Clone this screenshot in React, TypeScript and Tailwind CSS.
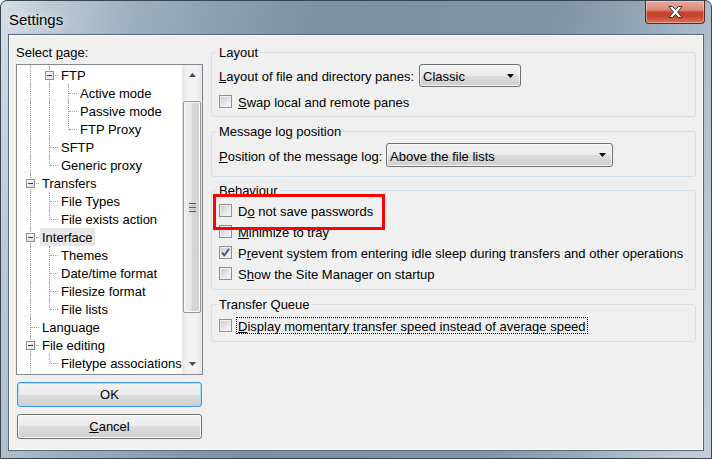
import React from "react";

type Row = { label: string; level: number; box?: boolean; last?: boolean; selected?: boolean };

const rows: Row[] = [
  { label: "FTP", level: 1, box: true },
  { label: "Active mode", level: 2 },
  { label: "Passive mode", level: 2 },
  { label: "FTP Proxy", level: 2, last: true },
  { label: "SFTP", level: 1 },
  { label: "Generic proxy", level: 1, last: true },
  { label: "Transfers", level: 0, box: true },
  { label: "File Types", level: 1 },
  { label: "File exists action", level: 1, last: true },
  { label: "Interface", level: 0, box: true, selected: true },
  { label: "Themes", level: 1 },
  { label: "Date/time format", level: 1 },
  { label: "Filesize format", level: 1 },
  { label: "File lists", level: 1, last: true },
  { label: "Language", level: 0 },
  { label: "File editing", level: 0, box: true },
  { label: "Filetype associations", level: 1, last: true },
];

function ExpandBox() {
  return (
    <div className="absolute left-[6px] top-[5px] w-[9px] h-[9px] border border-[#919191] bg-[linear-gradient(135deg,#ffffff,#dcdcdc)] flex items-center justify-center">
      <div className="w-[5px] h-[1px] bg-[#1f3f82]" />
    </div>
  );
}

function TreeRow({ r }: { r: Row }) {
  const cells = [];
  for (let i = 0; i < r.level; i++) {
    cells.push(
      <div key={i} className="relative w-[19px] shrink-0">
        <div className="absolute left-[10px] top-0 bottom-0 border-l border-dotted border-[#a0a0a0]" />
      </div>
    );
  }
  return (
    <div className="flex h-[18px] leading-[18px] whitespace-nowrap">
      {cells}
      <div className="relative w-[19px] shrink-0">
        <div
          className={
            r.last
              ? "absolute left-[10px] top-0 h-[10px] border-l border-dotted border-[#a0a0a0]"
              : "absolute left-[10px] top-0 bottom-0 border-l border-dotted border-[#a0a0a0]"
          }
        />
        <div className="absolute left-[11px] right-0 top-[9px] border-t border-dotted border-[#a0a0a0]" />
        {r.box && <ExpandBox />}
      </div>
      <span className={r.selected ? "ml-[1px] px-[2px] bg-[#e6e6e6]" : "ml-[1px] px-[2px]"}>
        <span className="inline-block translate-y-[1px]">{r.label}</span>
      </span>
    </div>
  );
}

function Arrow({ down }: { down?: boolean }) {
  return (
    <svg width="7" height="4" viewBox="0 0 7 4">
      <path d={down ? "M0 0H7L3.5 4Z" : "M0 4H7L3.5 0Z"} fill="#4a4a4a" />
    </svg>
  );
}

function Scrollbar() {
  return (
    <div className="w-[20px] shrink-0 flex flex-col bg-[linear-gradient(90deg,#e4e4e4,#f2f2f2_25%,#f2f2f2_75%,#e4e4e4)]">
      <div className="h-[20px] flex items-center justify-center">
        <Arrow />
      </div>
      <div className="h-[16px]" />
      <div className="h-[212px] mx-[1px] rounded-[2px] border border-[#979797] bg-[linear-gradient(90deg,#f0f0f0,#e4e4e4_45%,#d6d6d6_55%,#d2d2d2)] shadow-[inset_0_0_0_1px_#f7f7f7] flex flex-col items-center justify-center gap-[1px]">
        <div className="w-[7px] h-[1px] bg-[#555]" />
        <div className="w-[7px] h-[1px] bg-[#bbb]" />
        <div className="w-[7px] h-[1px] bg-[#555]" />
        <div className="w-[7px] h-[1px] bg-[#bbb]" />
        <div className="w-[7px] h-[1px] bg-[#555]" />
      </div>
      <div className="flex-1" />
      <div className="h-[20px] flex items-center justify-center">
        <Arrow down />
      </div>
    </div>
  );
}

function Checkbox({ checked }: { checked?: boolean }) {
  return (
    <span className="relative inline-block w-[13px] h-[13px] shrink-0 border border-[#8e8f8f] bg-[linear-gradient(135deg,#c6c9ce,#eeeeee_70%,#f6f6f6)] shadow-[inset_0_0_0_1px_#f0f0f0]">
      {checked && (
        <svg className="absolute left-0 top-0" width="11" height="11" viewBox="0 0 11 11">
          <path d="M2 5.5L4.3 8.3L9.2 1.8" fill="none" stroke="#3b4d85" strokeWidth="1.8" />
        </svg>
      )}
    </span>
  );
}

function Combo({ value, className }: { value: string; className: string }) {
  return (
    <div
      className={
        "flex items-center rounded-[3px] border border-[#707070] bg-[linear-gradient(#f2f2f2,#ebebeb_50%,#dddddd_50%,#cfcfcf)] shadow-[inset_0_0_0_1px_#f8f8f8] pl-[3px] pr-[6px] " +
        className
      }
    >
      <span className="flex-1 whitespace-nowrap translate-y-[1px]">{value}</span>
      <svg width="7" height="4" viewBox="0 0 7 4">
        <path d="M0 0H7L3.5 4Z" fill="#000" />
      </svg>
    </div>
  );
}

function Group({ title, className, children }: { title: string; className: string; children: React.ReactNode }) {
  return (
    <fieldset className={"border border-[#d5dfe5] rounded-[3px] pl-[5px] " + className}>
      <legend className="px-[2px] leading-[14px]">
        <span className="inline-block translate-y-[1px]">{title}</span>
      </legend>
      <div className="pl-[2px]">{children}</div>
    </fieldset>
  );
}

function CheckRow({ checked, children, className }: { checked?: boolean; children: React.ReactNode; className: string }) {
  return (
    <div className={"flex items-center gap-[6px] whitespace-nowrap " + className}>
      <Checkbox checked={checked} />
      <span className="translate-y-[1px]">{children}</span>
    </div>
  );
}

export default function App() {
  return (
    <div className="relative w-[712px] h-[459px] overflow-hidden flex flex-col rounded-t-[7px] border border-[#3a4552] bg-[linear-gradient(100deg,#d4dee8_0%,#bccad7_6%,#9aaebe_18%,#8ba1b2_28%,#7c92a3_40%,#7e93a4_70%,#95a8b8_82%,#b4c2ce_92%,#c3cfd9_100%)] font-['Liberation_Sans',Arial,sans-serif] text-[13px] leading-[15px] text-black">
      {/* Title bar */}
      <div className="h-[33px] shrink-0 flex items-start">
        <span className="ml-[8px] mt-[10px] text-[15px] leading-[17px] [text-shadow:0_0_8px_rgba(255,255,255,0.9),0_0_14px_rgba(255,255,255,0.7)]">
          Settings
        </span>
        <div className="ml-auto mr-[6px] w-[60px] h-[23px] rounded-b-[4px] border border-t-0 border-[#5a2a24] bg-[linear-gradient(#e9a89b,#dc8a78_40%,#c4432d_52%,#c84630_72%,#dc7459)] shadow-[inset_0_0_0_1px_rgba(255,255,255,0.35)] flex items-center justify-center">
          <svg width="15" height="12" viewBox="0 0 15 12">
            <path
              d="M1 0.5H4.6L7.5 3.7L10.4 0.5H14L9.6 6L14 11.5H10.4L7.5 8.3L4.6 11.5H1L5.4 6Z"
              fill="#ffffff"
              stroke="#3a3a3a"
              strokeWidth="1"
              strokeLinejoin="round"
            />
          </svg>
        </div>
      </div>

      {/* Client area */}
      <div className="mx-[7px] mb-[7px] flex-1 border border-[#55687b]">
        <div className="h-full border border-white bg-[#f0f0f0] flex">
          {/* Left column */}
          <div className="ml-[6px] w-[187px] shrink-0 flex flex-col">
            <div className="mt-[9px] h-[15px] whitespace-nowrap">
              Select <span className="underline">p</span>age:
            </div>
            <div className="mt-[4px] h-[311px] border border-[#828790] bg-white flex overflow-hidden">
              <div className="flex-1 pl-[3px] pt-[1px] overflow-hidden">
                {rows.map((r, i) => (
                  <TreeRow key={i} r={r} />
                ))}
              </div>
              <Scrollbar />
            </div>
            <button className="mt-[7px] ml-[1px] w-[185px] h-[25px] rounded-[3px] border border-[#3c9ad8] shadow-[inset_0_0_0_1px_#aadcf5] bg-[linear-gradient(#f2f2f2,#ebebeb_50%,#dddddd_50%,#cfcfcf)] text-center">
              OK
            </button>
            <button className="mt-[7px] ml-[1px] w-[185px] h-[25px] rounded-[3px] border border-[#707070] shadow-[inset_0_0_0_1px_#fbfbfb] bg-[linear-gradient(#f2f2f2,#ebebeb_50%,#dddddd_50%,#cfcfcf)] text-center">
              <span className="underline">C</span>ancel
            </button>
          </div>

          {/* Right column */}
          <div className="ml-[8px] mr-[6px] flex-1 flex flex-col pt-[9px]">
            <Group title="Layout" className="pt-[5px] pb-[7px]">
              <div className="flex items-center h-[23px]">
                <span className="w-[200px] whitespace-nowrap translate-y-[1px]">
                  <span className="underline">L</span>ayout of file and directory panes:
                </span>
                <Combo value="Classic" className="w-[102px] h-[23px]" />
              </div>
              <CheckRow className="mt-[7px] h-[15px]">
                <span className="underline">S</span>wap local and remote panes
              </CheckRow>
            </Group>

            <Group title="Message log position" className="mt-[7px] pt-[5px] pb-[9px]">
              <div className="flex items-center h-[24px]">
                <span className="w-[167px] whitespace-nowrap translate-y-[1px]">
                  <span className="underline">P</span>osition of the message log:
                </span>
                <Combo value="Above the file lists" className="w-[227px] h-[24px]" />
              </div>
            </Group>

            <Group title="Behaviour" className="mt-[6px] pt-[3px] pb-[5px]">
              <CheckRow className="h-[21px]">
                D<span className="underline">o</span> not save passwords
              </CheckRow>
              <CheckRow className="h-[21px]">
                <span className="underline">M</span>inimize to tray
              </CheckRow>
              <CheckRow checked className="h-[21px]">
                P<span className="underline">r</span>event system from entering idle sleep during transfers and other operations
              </CheckRow>
              <CheckRow className="h-[21px]">
                S<span className="underline">h</span>ow the Site Manager on startup
              </CheckRow>
            </Group>

            <Group title="Transfer Queue" className="mt-[7px] pt-[6px] pb-[7px]">
              <div className="flex items-center gap-[4px] h-[17px] whitespace-nowrap">
                <Checkbox />
                <span className="border border-dotted border-black px-[1px] leading-[15px]">
                  <span className="inline-block translate-y-[1px]">
                    <span className="underline">D</span>isplay momentary transfer speed instead of average speed
                  </span>
                </span>
              </div>
            </Group>
          </div>
        </div>
      </div>

      {/* Red annotation rectangle */}
      <div className="absolute left-[212px] top-[193px] w-[172px] h-[36px] border-[3px] border-[#ff0000]" />
    </div>
  );
}
